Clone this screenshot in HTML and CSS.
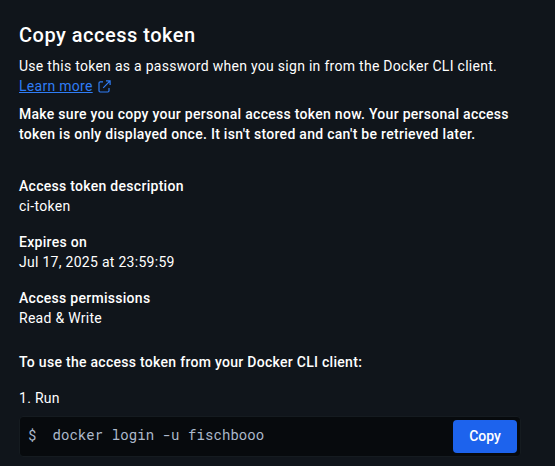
FILE: index.html
```html
<!DOCTYPE html>
<html lang="en">
<head>
<meta charset="utf-8">
<title>Copy access token</title>
<link rel="stylesheet" href="styles.css">
</head>
<body>
<main class="panel">
  <h1 class="title">Copy access token</h1>
  <p class="intro">Use this token as a password when you sign in from the Docker CLI client.<br>
    <a class="link" href="#"><span class="link-text">Learn more</span><svg class="link-icon" viewBox="0 0 13 13" fill="none" stroke="currentColor" stroke-width="1.2"><path d="M5 1.8H2.2Q1 1.8 1 3V10.8Q1 12 2.2 12H9.8Q11 12 11 10.8V8M8 .9H12.1V5M11.8 1.2L5.2 7.8"/></svg></a></p>
  <p class="warning">Make sure you copy your personal access token now. Your personal access token is only displayed once. It isn't stored and can't be retrieved later.</p>
  <dl class="details">
    <div><dt>Access token description</dt><dd>ci-token</dd></div>
    <div><dt>Expires on</dt><dd>Jul 17, 2025 at 23:59:59</dd></div>
    <div><dt>Access permissions</dt><dd>Read &amp; Write</dd></div>
  </dl>
  <p class="usage">To use the access token from your Docker CLI client:</p>
  <p class="step">1. Run</p>
  <div class="command">
    <code><span class="prompt">$</span>docker login -u fischbooo</code>
    <button class="copy" type="button">Copy</button>
  </div>
</main>
</body>
</html>
```

FILE: styles.css
```css
* { box-sizing: border-box; }
body {
  margin: 0;
  height: 466px;
  overflow: hidden;
  background: #10151b;
  color: #fff;
  font: 400 14px/20px Roboto, sans-serif;
  letter-spacing: 0.285px;
}
.panel { width: 521px; padding: 22px 0 0 19px; }
h1, p, dl, dd { margin: 0; }
.title { font-size: 20px; line-height: 26px; font-weight: 500; letter-spacing: 0.5px; margin-bottom: 8px; }
.link { color: #2f7df6; display: inline-flex; align-items: center; gap: 5px; text-decoration: none; }
.link-text { text-decoration: underline; }
.link-icon { width: 13px; height: 13px; margin-top: 1px; }
.warning { font-weight: 500; margin-top: 8px; }
.details { display: flex; flex-direction: column; gap: 16px; margin-top: 32px; }
dt, .usage { font-weight: 500; }
.usage { margin-top: 24px; }
.step { margin-top: 16px; }
.command {
  display: flex;
  align-items: center;
  justify-content: space-between;
  height: 41px;
  margin-top: 8px;
  padding: 0 3px 0 8px;
  border: 1px solid #151b20;
  border-radius: 4px;
  background: #070a0d;
}
code {
  padding-bottom: 3px;
  font: 14px/20px "Roboto Mono", "DejaVu Sans Mono", monospace;
  letter-spacing: 0.07px;
  color: #adb9cb;
}
.prompt { margin-right: 16px; }
.copy {
  width: 64px;
  height: 33px;
  padding: 0 0 1px;
  border: 0;
  border-radius: 4px;
  background: #1d63ed;
  color: #fff;
  font: 500 14px/20px Roboto, sans-serif;
  letter-spacing: 0;
}
```
